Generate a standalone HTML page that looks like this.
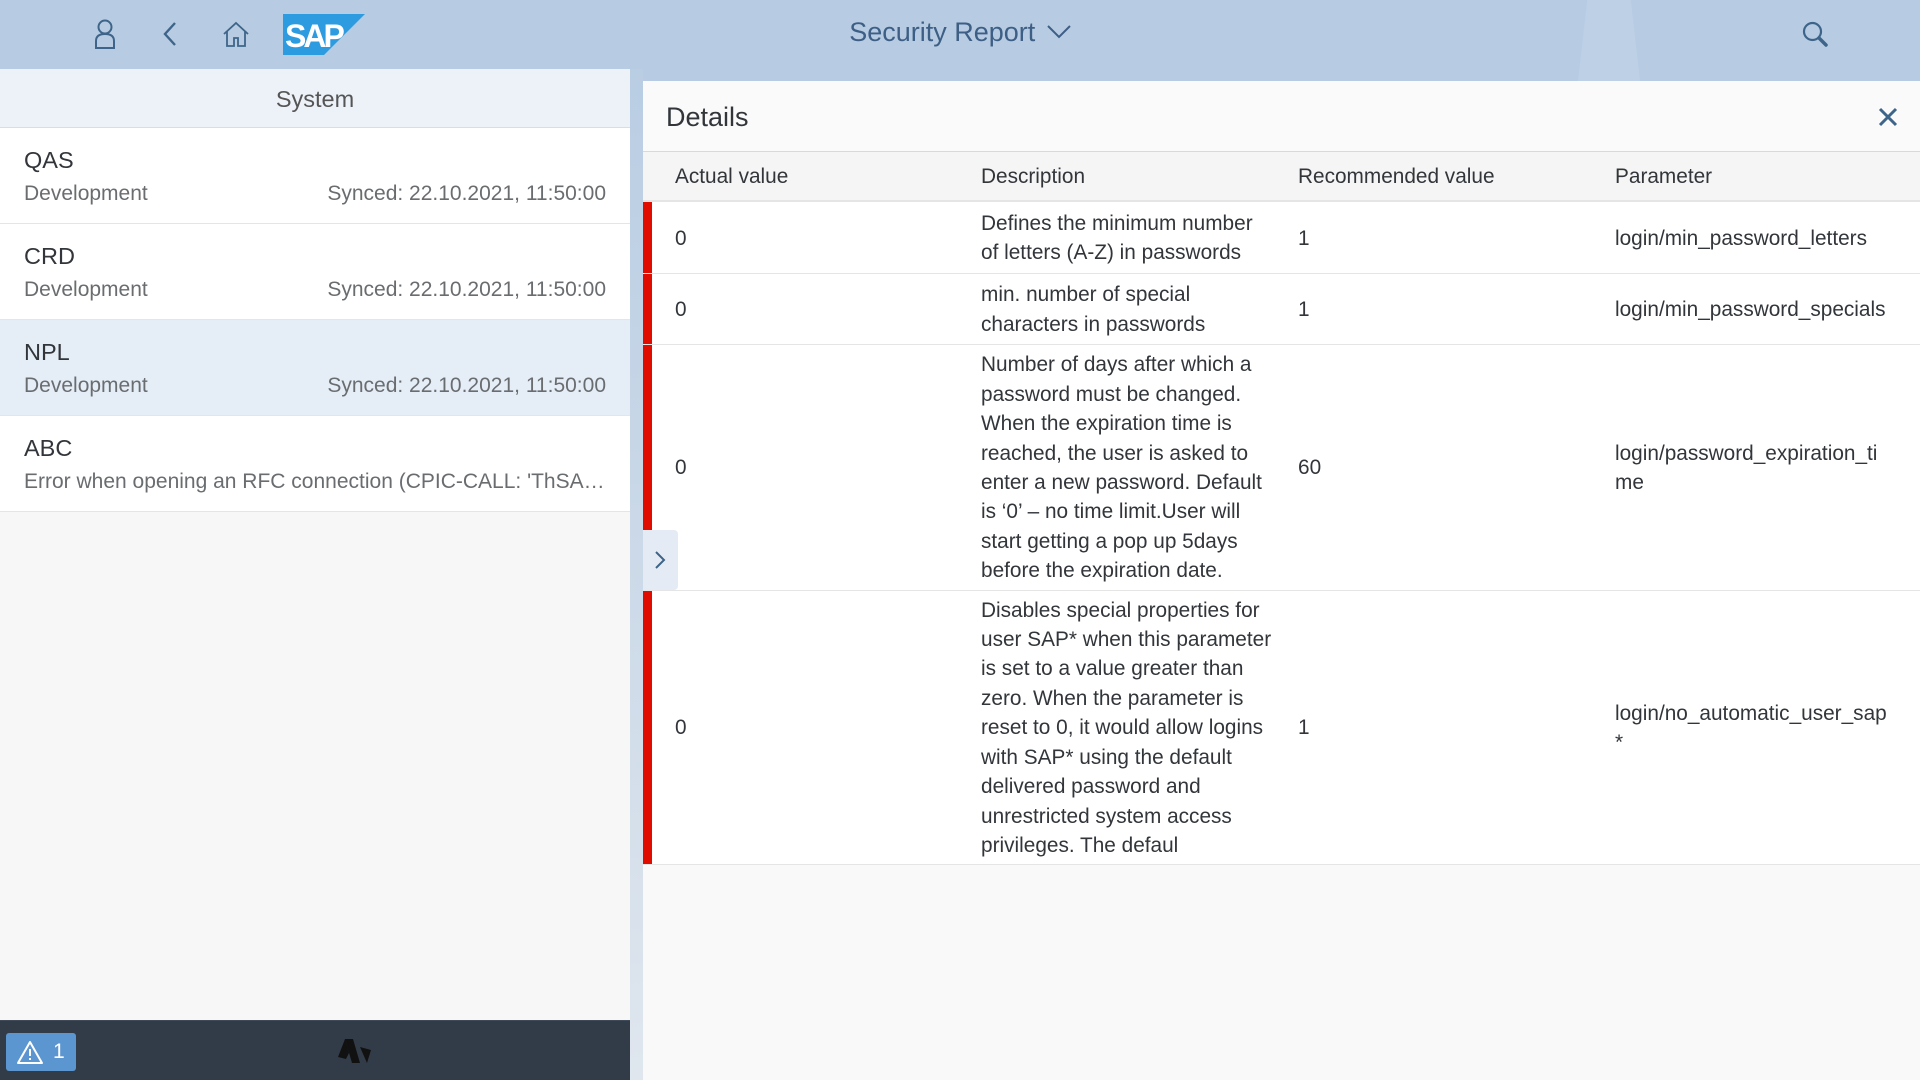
<!DOCTYPE html>
<html><head><meta charset="utf-8"><style>
*{box-sizing:border-box;margin:0;padding:0}
body{width:1920px;height:1080px;overflow:hidden;font-family:"Liberation Sans",Arial,sans-serif;background:#b7cce3;position:relative;color:#32363a}
.hdr{position:absolute;left:0;top:0;width:1920px;height:69px;background:#b7cce3}
.beam{position:absolute;left:1578px;top:0;width:62px;height:81px;background:#bdd0e6;clip-path:polygon(15% 0,85% 0,100% 100%,0 100%)}
.title{position:absolute;left:0;width:1920px;top:17px;text-align:center;font-size:27px;color:#3e5f85}
.left{position:absolute;left:0;top:69px;width:630px;height:1011px;background:#f7f7f7}
.lh{height:59px;background:#edf2f8;border-bottom:1px solid #d6dfe9;text-align:center;font-size:23.5px;line-height:60px;color:#555}
.it{height:96px;background:#fff;border-bottom:1px solid #e5e5e5;padding:18px 24px 0 24px;position:relative}
.it.sel{background:#e5edf7}
.it .t{font-size:23.5px;line-height:28px;color:#32363a}
.it .s{font-size:21px;line-height:30px;color:#6a6d70;margin-top:5px;white-space:nowrap;overflow:hidden}
.it .r{position:absolute;right:24px;top:51px;font-size:21px;line-height:30px;color:#6a6d70}
.foot{position:absolute;left:0;top:1020px;width:630px;height:60px;background:#323c49;border-top:1px solid #3f4a58}
.warn{position:absolute;left:6px;top:12px;width:70px;height:38px;background:#5b96d0;border-radius:3px;color:#fff;font-size:21px;line-height:38px}
.div{position:absolute;left:630px;top:69px;width:13px;height:1011px;background:linear-gradient(#b9cde3,#dfe6ee)}
.right{position:absolute;left:643px;top:81px;width:1277px;height:999px;background:#f9f9f9}
.dh{height:71px;background:#fafafa;border-bottom:1px solid #d9d9d9;font-size:27px;line-height:72px;padding-left:23px;color:#32363a}
table{border-collapse:collapse;width:1277px;table-layout:fixed;font-size:20.8px;line-height:29.4px}
th{font-weight:normal;text-align:left;height:49px;background:#f5f5f5;color:#32363a;border-bottom:2px solid #e5e5e5;padding:2px 0 0 0}
td{background:#fff;border-bottom:1px solid #e5e5e5;vertical-align:middle;padding:2px 0 0 0}
td.bar{background:#e00c00}
.c1{padding-left:23px!important}
.btn{position:absolute;left:643px;top:530px;width:35px;height:60px;background:#e5ebf4;border-radius:0 4px 4px 0}
</style></head><body>
<div class="hdr">
<div class="beam"></div>
<svg style="position:absolute;left:93px;top:19px" width="24" height="30" viewBox="0 0 24 30" fill="none" stroke="#3e6589" stroke-width="2"><circle cx="12" cy="8" r="6.5"/><path d="M3 29V22q0-7 9-7t9 7v7z"/></svg>
<svg style="position:absolute;left:162px;top:21px" width="16" height="26" viewBox="0 0 16 26" fill="none" stroke="#3e6589" stroke-width="2.4"><path d="M13 2L3 13l10 11"/></svg>
<svg style="position:absolute;left:222px;top:20px" width="28" height="28" viewBox="0 0 28 28" fill="none" stroke="#3e6589" stroke-width="1.8"><path d="M2 14L14 3l12 11M5 11v15h7v-8h4v8h7V11"/></svg>
<svg style="position:absolute;left:283px;top:14px" width="82" height="41" viewBox="0 0 82 41"><polygon points="0,0 82,0 41,41 0,41" fill="#2d9be0"/><text x="2" y="33" font-family="Liberation Sans" font-weight="bold" font-size="32" fill="#fff" letter-spacing="-3">SAP</text></svg>
<div class="title">Security Report <svg width="24" height="14" viewBox="0 0 24 14" style="margin-left:4px;vertical-align:2px" fill="none" stroke="#3e5f85" stroke-width="2"><path d="M1 1l11 11L23 1"/></svg></div>
<svg style="position:absolute;left:1802px;top:21px" width="26" height="26" viewBox="0 0 26 26" fill="none" stroke="#3e6589" stroke-width="2.2"><circle cx="10.5" cy="10.5" r="8.5"/><path d="M17 17l7 7" stroke-width="3.5" stroke-linecap="round"/></svg>
</div>
<div class="left">
<div class="lh">System</div>
<div class="it"><div class="t">QAS</div><div class="s">Development</div><div class="r">Synced: 22.10.2021, 11:50:00</div></div>
<div class="it"><div class="t">CRD</div><div class="s">Development</div><div class="r">Synced: 22.10.2021, 11:50:00</div></div>
<div class="it sel"><div class="t">NPL</div><div class="s">Development</div><div class="r">Synced: 22.10.2021, 11:50:00</div></div>
<div class="it"><div class="t">ABC</div><div class="s">Error when opening an RFC connection (CPIC-CALL: 'ThSA…</div></div>
</div>
<div class="foot">
<div class="warn"><svg style="position:absolute;left:10px;top:7px" width="28" height="25" viewBox="0 0 28 25" fill="none" stroke="#fff" stroke-width="2"><path d="M14 2L2 23h24z" stroke-linejoin="round"/><path d="M14 9v7M14 18v2"/></svg><span style="position:absolute;left:47px">1</span></div>
<svg style="position:absolute;left:338px;top:16px" width="35" height="28" viewBox="0 0 35 28"><path d="M7 2h8l7 24h-8z M0 20l7-18 4 14-3 6z M22 10l11 3-4 13z" fill="#111"/></svg>
</div>
<div class="div"></div>
<div class="right">
<div class="dh">Details<svg style="position:absolute;right:22px;top:26px" width="20" height="20" viewBox="0 0 20 20" stroke="#3e6589" stroke-width="3"><path d="M2 2l16 16M18 2L2 18"/></svg></div>
<table>
<colgroup><col style="width:9px"><col style="width:329px"><col style="width:317px"><col style="width:317px"><col style="width:305px"></colgroup>
<tr><th></th><th class="c1">Actual value</th><th>Description</th><th>Recommended value</th><th>Parameter</th></tr>
<tr style="height:72px"><td class="bar"></td><td class="c1">0</td><td>Defines the minimum number<br>of letters (A-Z) in passwords</td><td>1</td><td>login/min_password_letters</td></tr>
<tr style="height:71px"><td class="bar"></td><td class="c1">0</td><td>min. number of special<br>characters in passwords</td><td>1</td><td>login/min_password_specials</td></tr>
<tr style="height:246px"><td class="bar"></td><td class="c1">0</td><td>Number of days after which a<br>password must be changed.<br>When the expiration time is<br>reached, the user is asked to<br>enter a new password. Default<br>is ‘0’ – no time limit.User will<br>start getting a pop up 5days<br>before the expiration date.</td><td>60</td><td>login/password_expiration_ti<br>me</td></tr>
<tr style="height:274px"><td class="bar"></td><td class="c1">0</td><td>Disables special properties for<br>user SAP* when this parameter<br>is set to a value greater than<br>zero. When the parameter is<br>reset to 0, it would allow logins<br>with SAP* using the default<br>delivered password and<br>unrestricted system access<br>privileges. The defaul</td><td>1</td><td>login/no_automatic_user_sap<br>*</td></tr>
</table>
</div>
<div class="btn"><svg style="position:absolute;left:11px;top:20px" width="12" height="20" viewBox="0 0 12 20" fill="none" stroke="#3e6589" stroke-width="2"><path d="M2 2l8 8-8 8"/></svg></div>
</body></html>
